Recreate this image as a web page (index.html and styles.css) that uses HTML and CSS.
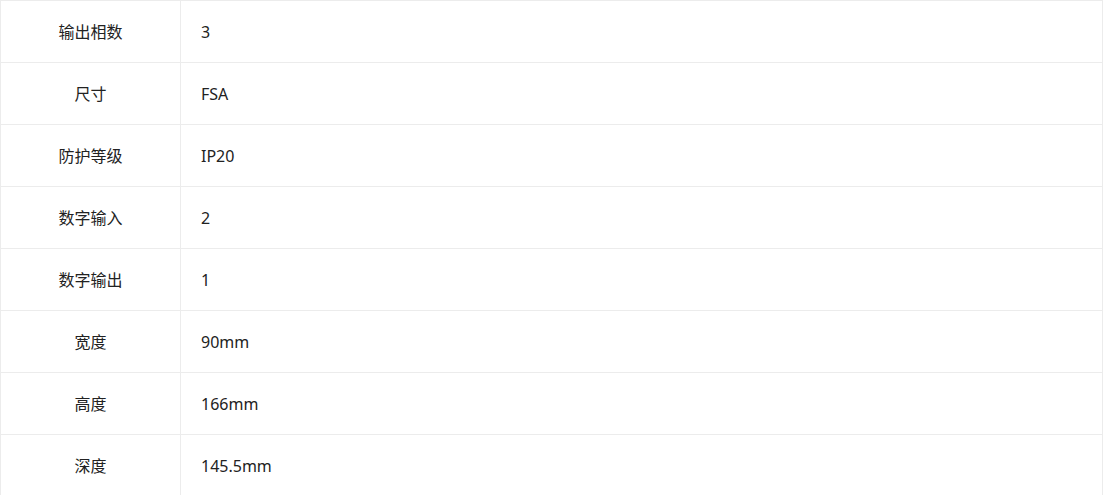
FILE: index.html
```html
<!DOCTYPE html>
<html>

<head>
  <meta charset="UTF-8">
  <title>产品参数</title>
  <link rel="stylesheet" href="styles.css">
</head>

<body>
  <table class="params">
    <tr>
      <td class="label">输出相数</td>
      <td class="value">3</td>
    </tr>
    <tr>
      <td class="label">尺寸</td>
      <td class="value">FSA</td>
    </tr>
    <tr>
      <td class="label">防护等级</td>
      <td class="value">IP20</td>
    </tr>
    <tr>
      <td class="label">数字输入</td>
      <td class="value">2</td>
    </tr>
    <tr>
      <td class="label">数字输出</td>
      <td class="value">1</td>
    </tr>
    <tr>
      <td class="label">宽度</td>
      <td class="value">90mm</td>
    </tr>
    <tr>
      <td class="label">高度</td>
      <td class="value">166mm</td>
    </tr>
    <tr>
      <td class="label">深度</td>
      <td class="value">145.5mm</td>
    </tr>
  </table>
</body>

</html>
```

FILE: styles.css
```css
body {
  margin: 0;
  background: #fff;
  color: #222;
  font-family: "Noto Sans", "Noto Sans CJK SC", sans-serif;
  font-size: 16px;
}

.params {
  width: 1103px;
  border-collapse: collapse;
  table-layout: fixed;
}

.params td {
  border: 1px solid #ececec;
  height: 61px;
  padding: 0;
  line-height: 20px;
}

.label {
  width: 179px;
  text-align: center;
}

.value {
  padding-left: 20px !important;
  text-align: left;
}
```
